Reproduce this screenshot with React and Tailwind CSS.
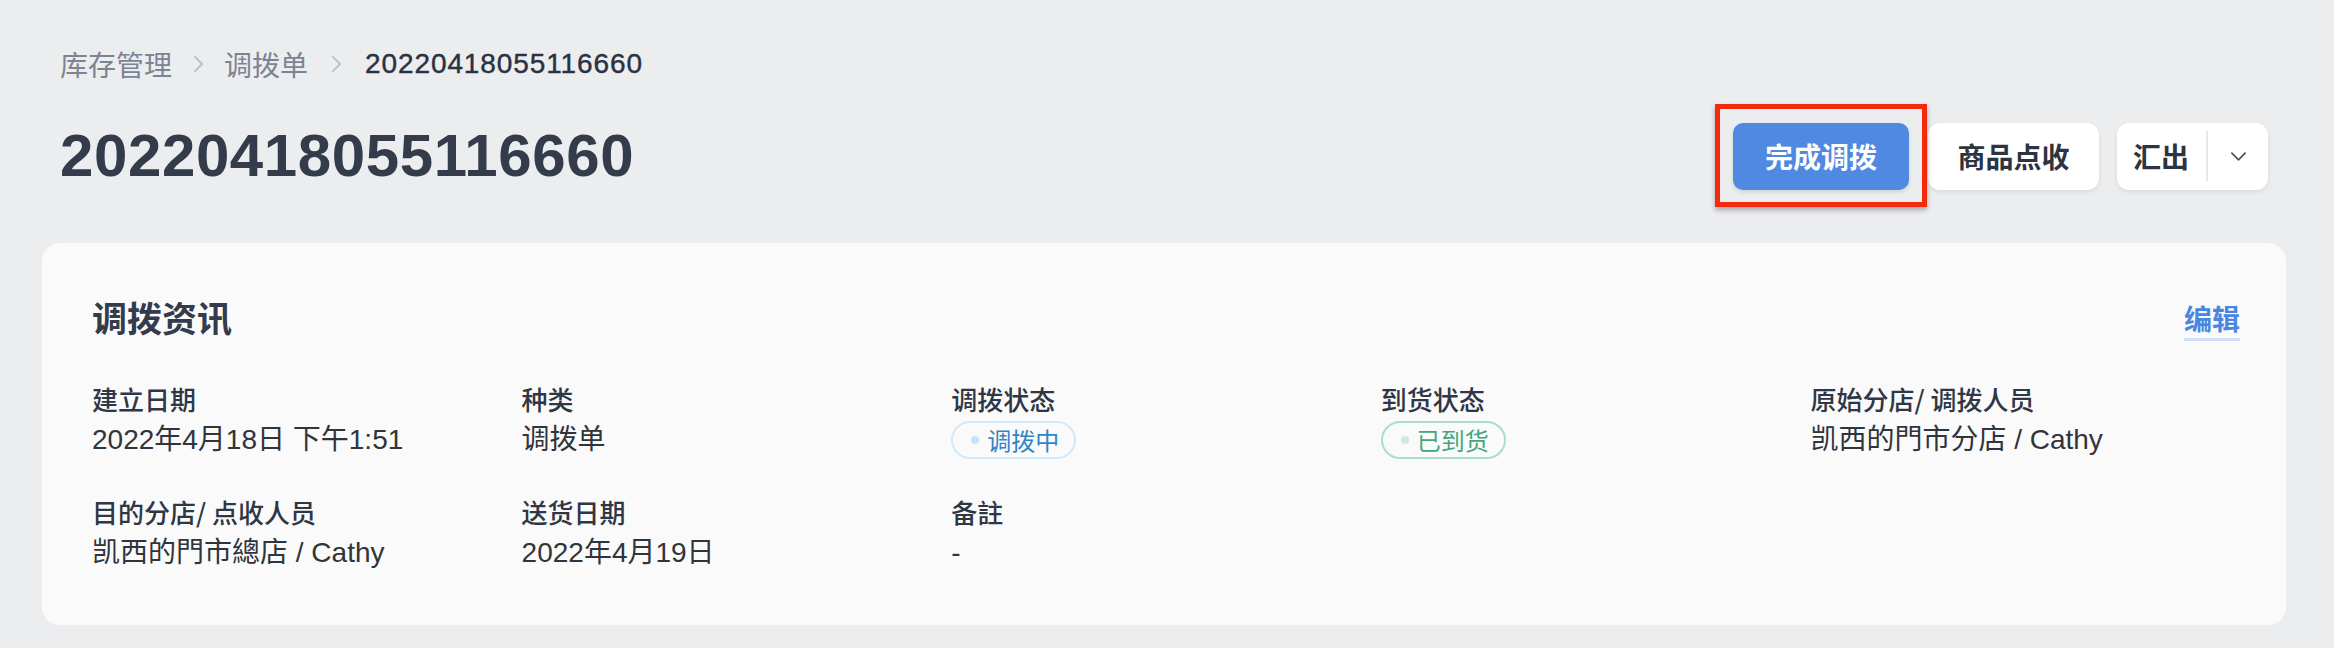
const cjk = "font-['Noto_Sans_CJK_SC',sans-serif]";
const latin = "font-['Liberation_Sans','Noto_Sans_CJK_SC',sans-serif]";

function Chevron({ className }) {
    return (
        <svg viewBox="0 0 10 16" className={className} fill="none" stroke="currentColor" strokeWidth="1.5" strokeLinecap="round" strokeLinejoin="round">
            <path d="M2.5 2l6 6-6 6" />
        </svg>
    );
}

function Badge({ tone, children }) {
    const styles =
        tone === "blue"
            ? { box: "border-[#d0eafc] text-[#2f86c6]", dot: "bg-[#c4e4fb]" }
            : { box: "border-[#a9dfc8] text-[#44a57d]", dot: "bg-[#cfe9df]" };
    return (
        <span className={`inline-flex h-[38px] items-center gap-[8px] rounded-full border-2 pl-[18px] pr-[15px] text-[24px] leading-none ${cjk} ${styles.box}`}>
            <span className={`h-[8px] w-[8px] rounded-full ${styles.dot}`} />
            {children}
        </span>
    );
}

function Field({ label, children }) {
    return (
        <div className="flex flex-col">
            <div className="h-[36px] text-[26px] font-medium leading-[36px] text-[#2f3645]">{label}</div>
            <div className={`mt-[3px] flex h-[40px] items-center text-[28px] text-[#30343b] ${latin}`}>{children}</div>
        </div>
    );
}

export default function App() {
    return (
        <div className={`min-h-screen w-full bg-[#ecedef] pl-[42px] pr-[48px] pt-[46px] ${cjk}`}>
            <div className="px-[18px]">
                <div className="flex h-[36px] items-center text-[28px]">
                    <span className="text-[#7c8493]">库存管理</span>
                    <Chevron className="mx-[20px] h-[20px] w-[12px] text-[#b9bec8]" />
                    <span className="text-[#7c8493]">调拨单</span>
                    <Chevron className="ml-[22px] mr-[23px] h-[20px] w-[12px] text-[#b9bec8]" />
                    <span className="font-['Liberation_Sans',sans-serif] text-[28px] tracking-[0.9px] text-[#2a3140] [-webkit-text-stroke:0.4px_#2a3140]">20220418055116660</span>
                </div>

                <div className="mt-[38px] flex h-[72px] items-center justify-between">
                    <h1 className="font-['Liberation_Sans',sans-serif] text-[60px] font-bold leading-none tracking-[0.6px] text-[#343b4b]">
                        20220418055116660
                    </h1>

                    <div className="flex items-center gap-[18px]">
                        <div className="relative">
                            <button className="h-[67px] w-[176px] rounded-[10px] bg-[#5089e1] text-[28px] font-bold text-white shadow-[0_2px_4px_rgba(0,0,0,0.12)]">
                                完成调拨
                            </button>
                            <div className="pointer-events-none absolute -bottom-[17px] -left-[18px] -right-[18px] -top-[19px] border-[5px] border-[#f52a0c] shadow-[0_3px_5px_rgba(0,0,0,0.3)]" />
                        </div>
                        <button className="ml-[1px] h-[67px] w-[171px] rounded-[12px] bg-white text-[28px] font-bold text-[#2d3340] shadow-[0_2px_5px_rgba(0,0,0,0.08)]">
                            商品点收
                        </button>
                        <div className="flex h-[67px] w-[151px] items-center rounded-[12px] bg-white shadow-[0_2px_5px_rgba(0,0,0,0.08)]">
                            <span className="flex-1 pl-[16px] text-[28px] font-bold text-[#2d3340]">汇出</span>
                            <span className="h-[50px] w-[2px] bg-[#e6e7ea]" />
                            <span className="flex w-[60px] items-center justify-center">
                                <svg viewBox="0 0 16 10" className="h-[11px] w-[19px] text-[#4b5261]" fill="none" stroke="currentColor" strokeWidth="1.6" strokeLinecap="round" strokeLinejoin="round">
                                    <path d="M2 2l6 6 6-6" />
                                </svg>
                            </span>
                        </div>
                    </div>
                </div>
            </div>

            <div className="mt-[51px] rounded-[18px] bg-[#fafafa] pb-[52px] pl-[50px] pr-[46px] pt-[50px]">
                <div className="flex h-[48px] items-center justify-between">
                    <h2 className="text-[35px] font-bold text-[#343b4b]">调拨资讯</h2>
                    <a className="border-b-[3px] border-[#cfe0f7] pb-[2px] pt-[6px] text-[28px] font-bold leading-[36px] text-[#4a86e0]">
                        编辑
                    </a>
                </div>

                <div className="mt-[40px] grid grid-cols-5 gap-y-[34px]">
                    <Field label="建立日期">2022年4月18日 下午1:51</Field>
                    <Field label="种类">调拨单</Field>
                    <Field label="调拨状态">
                        <Badge tone="blue">调拨中</Badge>
                    </Field>
                    <Field label="到货状态">
                        <Badge tone="green">已到货</Badge>
                    </Field>
                    <Field label="原始分店/ 调拨人员">凯西的門市分店 / Cathy</Field>
                    <Field label="目的分店/ 点收人员">凯西的門市總店 / Cathy</Field>
                    <Field label="送货日期">2022年4月19日</Field>
                    <Field label="备註">-</Field>
                </div>
            </div>
        </div>
    );
}
